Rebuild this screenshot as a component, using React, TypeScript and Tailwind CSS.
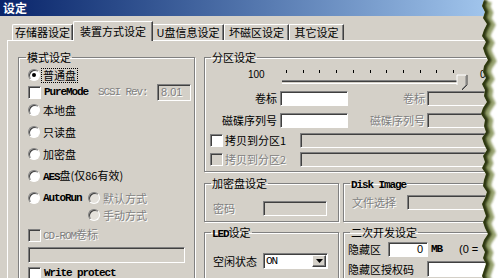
import React from "react";

const mono = "font-['Liberation_Mono',monospace] font-bold text-[11px] tracking-[-1.1px]";
const monoThin = "font-['Liberation_Mono',monospace] text-[11px] tracking-[-1.1px]";
const grey = "text-[#808080] [text-shadow:1px_1px_0_#fff]";
const sunken =
  "border border-t-[#808080] border-l-[#808080] border-r-white border-b-white shadow-[inset_1px_1px_0_#404040]";
const group =
  "border border-[#808080] shadow-[inset_1px_1px_0_#fff,1px_1px_0_#fff] min-w-0";

function Radio({ checked, disabled }: { checked?: boolean; disabled?: boolean }) {
  return (
    <span
      className={`w-[12px] h-[12px] shrink-0 rounded-full flex items-center justify-center ${sunken} ${
        disabled ? "bg-[#e4e1db]" : "bg-white"
      }`}
    >
      {checked && <span className="w-[4px] h-[4px] rounded-full bg-black" />}
    </span>
  );
}

function Check({ disabled }: { disabled?: boolean }) {
  return (
    <span
      className={`w-[13px] h-[13px] shrink-0 ${sunken} ${disabled ? "bg-[#d4d0c8]" : "bg-white"}`}
    />
  );
}

function Field({
  className,
  disabled,
  children,
}: {
  className?: string;
  disabled?: boolean;
  children?: React.ReactNode;
}) {
  return (
    <div
      className={`h-[15px] flex items-center ${sunken} ${
        disabled ? "bg-[#d4d0c8]" : "bg-white"
      } ${className ?? ""}`}
    >
      {children}
    </div>
  );
}

function Legend({ children }: { children: React.ReactNode }) {
  return <legend className="ml-[6px] px-[1px] leading-[12px] h-[12px]">{children}</legend>;
}

const tearOffs = [
  3, 1, 4, 2, 6, 3, 1, 5, 2, 4, 7, 3, 2, 5, 1, 4, 3, 6, 2, 0, 4, 3, 5, 1, 3, 6, 2, 4, 1, 5, 3, 2,
  6, 4, 1, 3, 5, 2, 4, 7, 3, 1, 4, 2, 5, 3, 1, 4,
];

// 右侧撕纸边
function TornEdge() {
  const pts = tearOffs.map((o, i) => `${7 + o},${i * 6}`);
  const line = "M" + pts.join(" L");
  const region = `M26,0 L${pts.join(" L")} L26,290 Z`;
  return (
    <svg className="absolute top-0 right-0" width="26" height="278" viewBox="0 0 26 278">
      <defs>
        <clipPath id="paper">
          <path d={region} />
        </clipPath>
        <filter id="soft" x="-100%" y="-10%" width="300%" height="120%">
          <feGaussianBlur stdDeviation="1.2" />
        </filter>
      </defs>
      <path d={region} fill="#fff" />
      <g clipPath="url(#paper)">
        <path d={line} transform="translate(3 1)" stroke="#6b7a30" strokeWidth="10" fill="none" opacity="0.7" filter="url(#soft)" />
        <path d={line} transform="translate(1 0)" stroke="#2c360a" strokeWidth="5" fill="none" filter="url(#soft)" />
      </g>
    </svg>
  );
}

function Slider() {
  const ticks = Array.from({ length: 11 }, (_, i) => 6 + i * 16.7);
  return (
    <svg width="190" height="27" viewBox="0 0 190 27" className="shrink-0">
      {ticks.map((x) => (
        <rect key={x} x={Math.round(x)} y="7" width="1" height="3" fill="#000" />
      ))}
      <rect x="2" y="17" width="182" height="1" fill="#808080" />
      <rect x="2" y="18" width="182" height="1" fill="#404040" />
      <rect x="2" y="20" width="182" height="1" fill="#fff" />
      <rect x="183" y="17" width="1" height="4" fill="#fff" />
      <polygon points="177,12 187,12 187,22 182,27 177,22" fill="#d4d0c8" />
      <polyline points="177,22 177,12 186,12" stroke="#fff" fill="none" />
      <polyline points="187,12 187,22 182,27" stroke="#404040" fill="none" />
      <polyline points="186,13 186,22 182,26" stroke="#808080" fill="none" />
    </svg>
  );
}

export default function App() {
  return (
    <div className="relative w-[500px] h-[278px] overflow-hidden bg-[#d4d0c8] text-black text-[11px] leading-none font-['Noto_Sans_CJK_SC',sans-serif]">
      {/* 标题栏 */}
      <div className="h-[16px] bg-linear-to-r from-[#0a246a] to-[#a6caf0] pl-[3px] flex items-center text-white font-bold text-[12px]">
        设定
      </div>

      {/* 选项卡 */}
      <div className="h-[24px] flex items-end pl-[12px]">
        <div className="w-[61px] h-[16px] flex items-center justify-center border-t border-l border-white border-r border-r-[#404040] shadow-[inset_-1px_0_0_#808080] rounded-tl-[2px]">
          存储器设定
        </div>
        <div className="relative z-10 w-[80px] h-[20px] -mb-px flex justify-center pt-[4px] bg-[#d4d0c8] border-t border-l border-white border-r border-r-[#404040] shadow-[inset_-1px_0_0_#808080] rounded-tl-[2px]">
          装置方式设定
        </div>
        <div className="w-[71px] h-[16px] flex items-center justify-center border-t border-white border-r border-r-[#404040] shadow-[inset_-1px_0_0_#808080]">
          U盘信息设定
        </div>
        <div className="w-[65px] h-[16px] flex items-center justify-center border-t border-l border-white border-r border-r-[#404040] shadow-[inset_-1px_0_0_#808080]">
          坏磁区设定
        </div>
        <div className="w-[55px] h-[16px] flex items-center justify-center border-t border-l border-white border-r border-r-[#404040] shadow-[inset_-1px_0_0_#808080]">
          其它设定
        </div>
      </div>

      {/* 面板 */}
      <div className="ml-[7px] border-t border-l border-white pt-[10px] pl-[10px] flex gap-[9px]">
        {/* 模式设定 */}
        <fieldset className={`w-[177px] h-[240px] shrink-0 ${group}`}>
          <legend className="ml-[7px] px-[1px] leading-[12px] h-[12px]">模式设定</legend>
          <div className="pl-[9px] flex flex-col">
            <div className="mt-[4px] h-[16px] flex items-center">
              <Radio checked />
              <span className="ml-[1px] px-[1px] py-[1px] border border-dotted border-black">普通盘</span>
            </div>
            <div className="mt-[1px] h-[17px] flex items-center">
              <Check />
              <span className={`ml-[3px] w-[54px] ${mono}`}>PureMode</span>
              <span className={`w-[59px] ${monoThin} ${grey}`}>SCSI Rev:</span>
              <div className={`w-[34px] h-[17px] flex items-center pl-[3px] bg-[#d4d0c8] font-['Liberation_Sans',sans-serif] ${sunken} ${grey}`}>
                8.01
              </div>
            </div>
            <div className="mt-[1px] h-[16px] flex items-center">
              <Radio />
              <span className="ml-[3px]">本地盘</span>
            </div>
            <div className="mt-[6px] h-[16px] flex items-center">
              <Radio />
              <span className="ml-[3px]">只读盘</span>
            </div>
            <div className="mt-[6px] h-[16px] flex items-center">
              <Radio />
              <span className="ml-[3px]">加密盘</span>
            </div>
            <div className="mt-[6px] h-[16px] flex items-center">
              <Radio />
              <span className="ml-[3px]">
                <span className={mono}>AES</span>盘(仅86有效)
              </span>
            </div>
            <div className="mt-[6px] h-[16px] flex items-center">
              <Radio />
              <span className={`ml-[3px] w-[45px] ${mono}`}>AutoRun</span>
              <Radio disabled />
              <span className={`ml-[3px] ${grey}`}>默认方式</span>
            </div>
            <div className="mt-[1px] h-[16px] flex items-center pl-[60px]">
              <Radio disabled />
              <span className={`ml-[3px] ${grey}`}>手动方式</span>
            </div>
            <div className="mt-[4px] h-[16px] flex items-center">
              <Check disabled />
              <span className={`ml-[2px] ${grey}`}>
                <span className={monoThin}>CD-ROM</span>卷标
              </span>
            </div>
            <Field disabled className="mt-[4px] w-[157px] h-[16px]" />
            <div className="mt-[2px] h-[16px] flex items-center">
              <Check />
              <span className={`ml-[3px] ${mono}`}>Write protect</span>
            </div>
          </div>
        </fieldset>

        {/* 右侧 */}
        <div className="flex-1 min-w-0 flex flex-col">
          <fieldset className={group}>
            <Legend>分区设定</Legend>
            <div className="h-[27px] flex items-start">
              <span className="ml-[43px] w-[32px] mt-[7px] font-['Liberation_Sans',sans-serif] text-[10px]">100</span>
              <Slider />
              <span className="ml-[10px] mt-[7px] font-['Liberation_Sans',sans-serif] text-[10px]">0</span>
            </div>
            <div className="mt-[1px] h-[15px] flex items-center">
              <span className="w-[72px] text-right">卷标</span>
              <Field className="ml-[3px] w-[68px]" />
              <span className={`w-[77px] text-right ${grey}`}>卷标</span>
              <Field disabled className="ml-[2px] flex-1" />
            </div>
            <div className="mt-[7px] h-[15px] flex items-center">
              <span className="w-[72px] text-right">磁碟序列号</span>
              <Field className="ml-[3px] w-[68px]" />
              <span className={`w-[77px] text-right ${grey}`}>磁碟序列号</span>
              <Field disabled className="ml-[2px] flex-1" />
            </div>
            <div className="mt-[5px] h-[15px] flex items-center pl-[5px]">
              <Check />
              <span className="ml-[2px] w-[75px]">拷贝到分区1</span>
              <Field disabled className="flex-1" />
            </div>
            <div className="mt-[4px] mb-[4px] h-[15px] flex items-center pl-[5px]">
              <Check disabled />
              <span className={`ml-[2px] w-[75px] ${grey}`}>拷贝到分区2</span>
              <Field disabled className="flex-1" />
            </div>
          </fieldset>

          <div className="mt-[5px] grid grid-cols-[135px_1fr] gap-x-[4px] gap-y-[4px]">
            <fieldset className={group}>
              <Legend>加密盘设定</Legend>
              <div className="mt-[12px] mb-[5px] h-[15px] flex items-center pl-[8px]">
                <span className={`w-[50px] ${grey}`}>密码</span>
                <Field disabled className="w-[64px]" />
              </div>
            </fieldset>
            <fieldset className={group}>
              <Legend>
                <span className={mono}>Disk Image</span>
              </Legend>
              <div className="mt-[6px] h-[15px] flex items-center pl-[8px]">
                <span className={`w-[55px] ${grey}`}>文件选择</span>
                <Field disabled className="flex-1" />
              </div>
            </fieldset>
            <fieldset className={`${group} pb-[20px]`}>
              <Legend>
                <span className={mono}>LED</span>设定
              </Legend>
              <div className="mt-[15px] h-[16px] flex items-center pl-[8px]">
                <span className="w-[50px]">空闲状态</span>
                <div className={`w-[65px] h-[16px] flex items-center bg-white ${sunken}`}>
                  <span className={`flex-1 pl-[2px] ${monoThin}`}>ON</span>
                  <span className="w-[14px] h-[12px] mr-[1px] flex items-center justify-center bg-[#d4d0c8] border border-t-white border-l-white border-r-[#404040] border-b-[#404040] shadow-[inset_-1px_-1px_0_#808080]">
                    <svg width="7" height="4" viewBox="0 0 7 4">
                      <polygon points="0,0 7,0 3.5,4" fill="#000" />
                    </svg>
                  </span>
                </div>
              </div>
            </fieldset>
            <fieldset className={`${group} pb-[20px]`}>
              <Legend>二次开发设定</Legend>
              <div className="mt-[4px] h-[15px] flex items-center pl-[4px]">
                <span className="w-[40px]">隐藏区</span>
                <Field className="w-[40px] justify-end pr-[4px]">
                  <span className="font-['Liberation_Sans',sans-serif]">0</span>
                </Field>
                <span className={`ml-[3px] ${mono}`}>MB</span>
                <span className="ml-[17px] font-['Liberation_Sans',sans-serif]">(0 =</span>
              </div>
              <div className="mt-[4px] h-[16px] flex items-center pl-[4px]">
                <span className="w-[79px]">隐藏区授权码</span>
                <Field className="flex-1 h-[16px]" />
              </div>
            </fieldset>
          </div>
        </div>
      </div>

      <TornEdge />
    </div>
  );
}
